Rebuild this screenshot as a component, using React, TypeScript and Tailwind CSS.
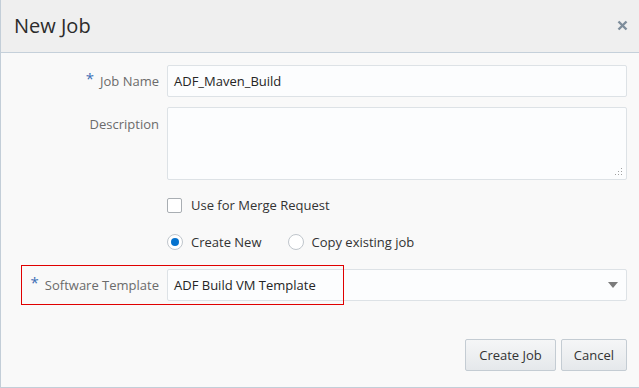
import React from "react";

function Label({ text, req, offset }: { text: string; req?: boolean; offset?: boolean }) {
  return (
    <div
      className={
        "w-[158px] h-[32px] flex items-center justify-end text-[13px] text-[#6b6b6b] shrink-0 " +
        (offset ? "pt-[4px]" : "pt-[1px]")
      }
    >
      {req && <span className="text-[#3d6fb6] text-[15px] mr-[6px] -mt-[6px] leading-none">*</span>}
      <span>{text}</span>
    </div>
  );
}

export default function App() {
  return (
    <div
      className="w-[639px] h-[388px] flex flex-col border-l border-b border-[#c3ced8] bg-[#f9f9f9] text-[#333]"
      style={{ fontFamily: '"Open Sans", "Noto Sans", sans-serif' }}
    >
      <div className="h-[53px] shrink-0 bg-[#efefef] border-b border-[#c5d0da] flex items-center justify-between pl-[13px] pr-[11px]">
        <div className="text-[20px] text-[#2b2b2b] -mt-[1px]">New Job</div>
        <svg width="11" height="11" viewBox="0 0 11 11" className="-mt-[1px]">
          <path d="M1.5 1.5 L9.5 9.5 M9.5 1.5 L1.5 9.5" stroke="#7e8d9b" strokeWidth="2.4" strokeLinecap="butt" />
        </svg>
      </div>

      <div className="flex flex-col pt-[12px] pr-[12px]">
        <div className="flex">
          <Label text="Job Name" req />
          <div className="ml-[8px] flex-1 h-[32px] bg-[#fcfdfe] border border-[#dde2e6] rounded-[2px] flex items-center px-[6px] pt-[1px] text-[13px] text-[#252525]">
            ADF_Maven_Build
          </div>
        </div>

        <div className="flex mt-[10px]">
          <Label text="Description" offset />
          <div className="ml-[8px] flex-1 h-[73px] bg-[#fcfdfe] border border-[#dde2e6] rounded-[2px] relative">
            <svg width="8" height="8" viewBox="0 0 8 8" className="absolute right-[3px] bottom-[3px]">
              <rect x="6" y="0" width="1" height="1" fill="#a0a0a0" />
              <rect x="6" y="3" width="1" height="1" fill="#a0a0a0" />
              <rect x="3" y="3" width="1" height="1" fill="#a0a0a0" />
              <rect x="6" y="6" width="1" height="1" fill="#a0a0a0" />
              <rect x="3" y="6" width="1" height="1" fill="#a0a0a0" />
              <rect x="0" y="6" width="1" height="1" fill="#a0a0a0" />
            </svg>
          </div>
        </div>

        <div className="flex mt-[15px] h-[20px] items-center pl-[166px]">
          <div className="w-[15px] h-[15px] bg-white border border-[#a9aeb3] rounded-[2px]" />
          <span className="ml-[9px] pt-[1px] text-[13px] text-[#333]">Use for Merge Request</span>
        </div>

        <div className="flex mt-[17px] h-[20px] items-center pl-[166px]">
          <div className="w-[16px] h-[16px] rounded-full bg-white border border-[#c0c6cc] flex items-center justify-center">
            <div className="w-[8px] h-[8px] rounded-full bg-[#0572ce]" />
          </div>
          <span className="ml-[8px] pt-[1px] text-[13px] text-[#333]">Create New</span>
          <div className="ml-[26px] w-[16px] h-[16px] rounded-full bg-white border border-[#c0c6cc]" />
          <span className="ml-[8px] pt-[1px] text-[13px] text-[#333]">Copy existing job</span>
        </div>

        <div className="flex mt-[17px] relative">
          <div className="absolute left-[20px] top-[-4px] w-[323px] h-[40px] border border-[#e00000] pointer-events-none" />
          <Label text="Software Template" req />
          <div className="ml-[8px] flex-1 h-[32px] bg-[#fcfdfe] border border-[#dde2e6] rounded-[2px] flex items-center justify-between pl-[6px] pr-[8px] text-[13px] text-[#252525]">
            <span className="pt-[1px]">ADF Build VM Template</span>
            <svg width="10" height="6" viewBox="0 0 10 6">
              <path d="M0 0 L10 0 L5 6 Z" fill="#7b7b7b" />
            </svg>
          </div>
        </div>

        <div className="flex justify-end mt-[38px] gap-[5px]">
          <button className="h-[32px] px-[13px] pt-[1px] text-[13px] text-[#333] border border-[#c4ccd3] rounded-[2px] bg-gradient-to-b from-[#f5f6f7] to-[#e5e8eb]">
            Create Job
          </button>
          <button className="h-[32px] px-[12px] pt-[1px] text-[13px] text-[#333] border border-[#c4ccd3] rounded-[2px] bg-gradient-to-b from-[#f5f6f7] to-[#e5e8eb]">
            Cancel
          </button>
        </div>
      </div>
    </div>
  );
}
